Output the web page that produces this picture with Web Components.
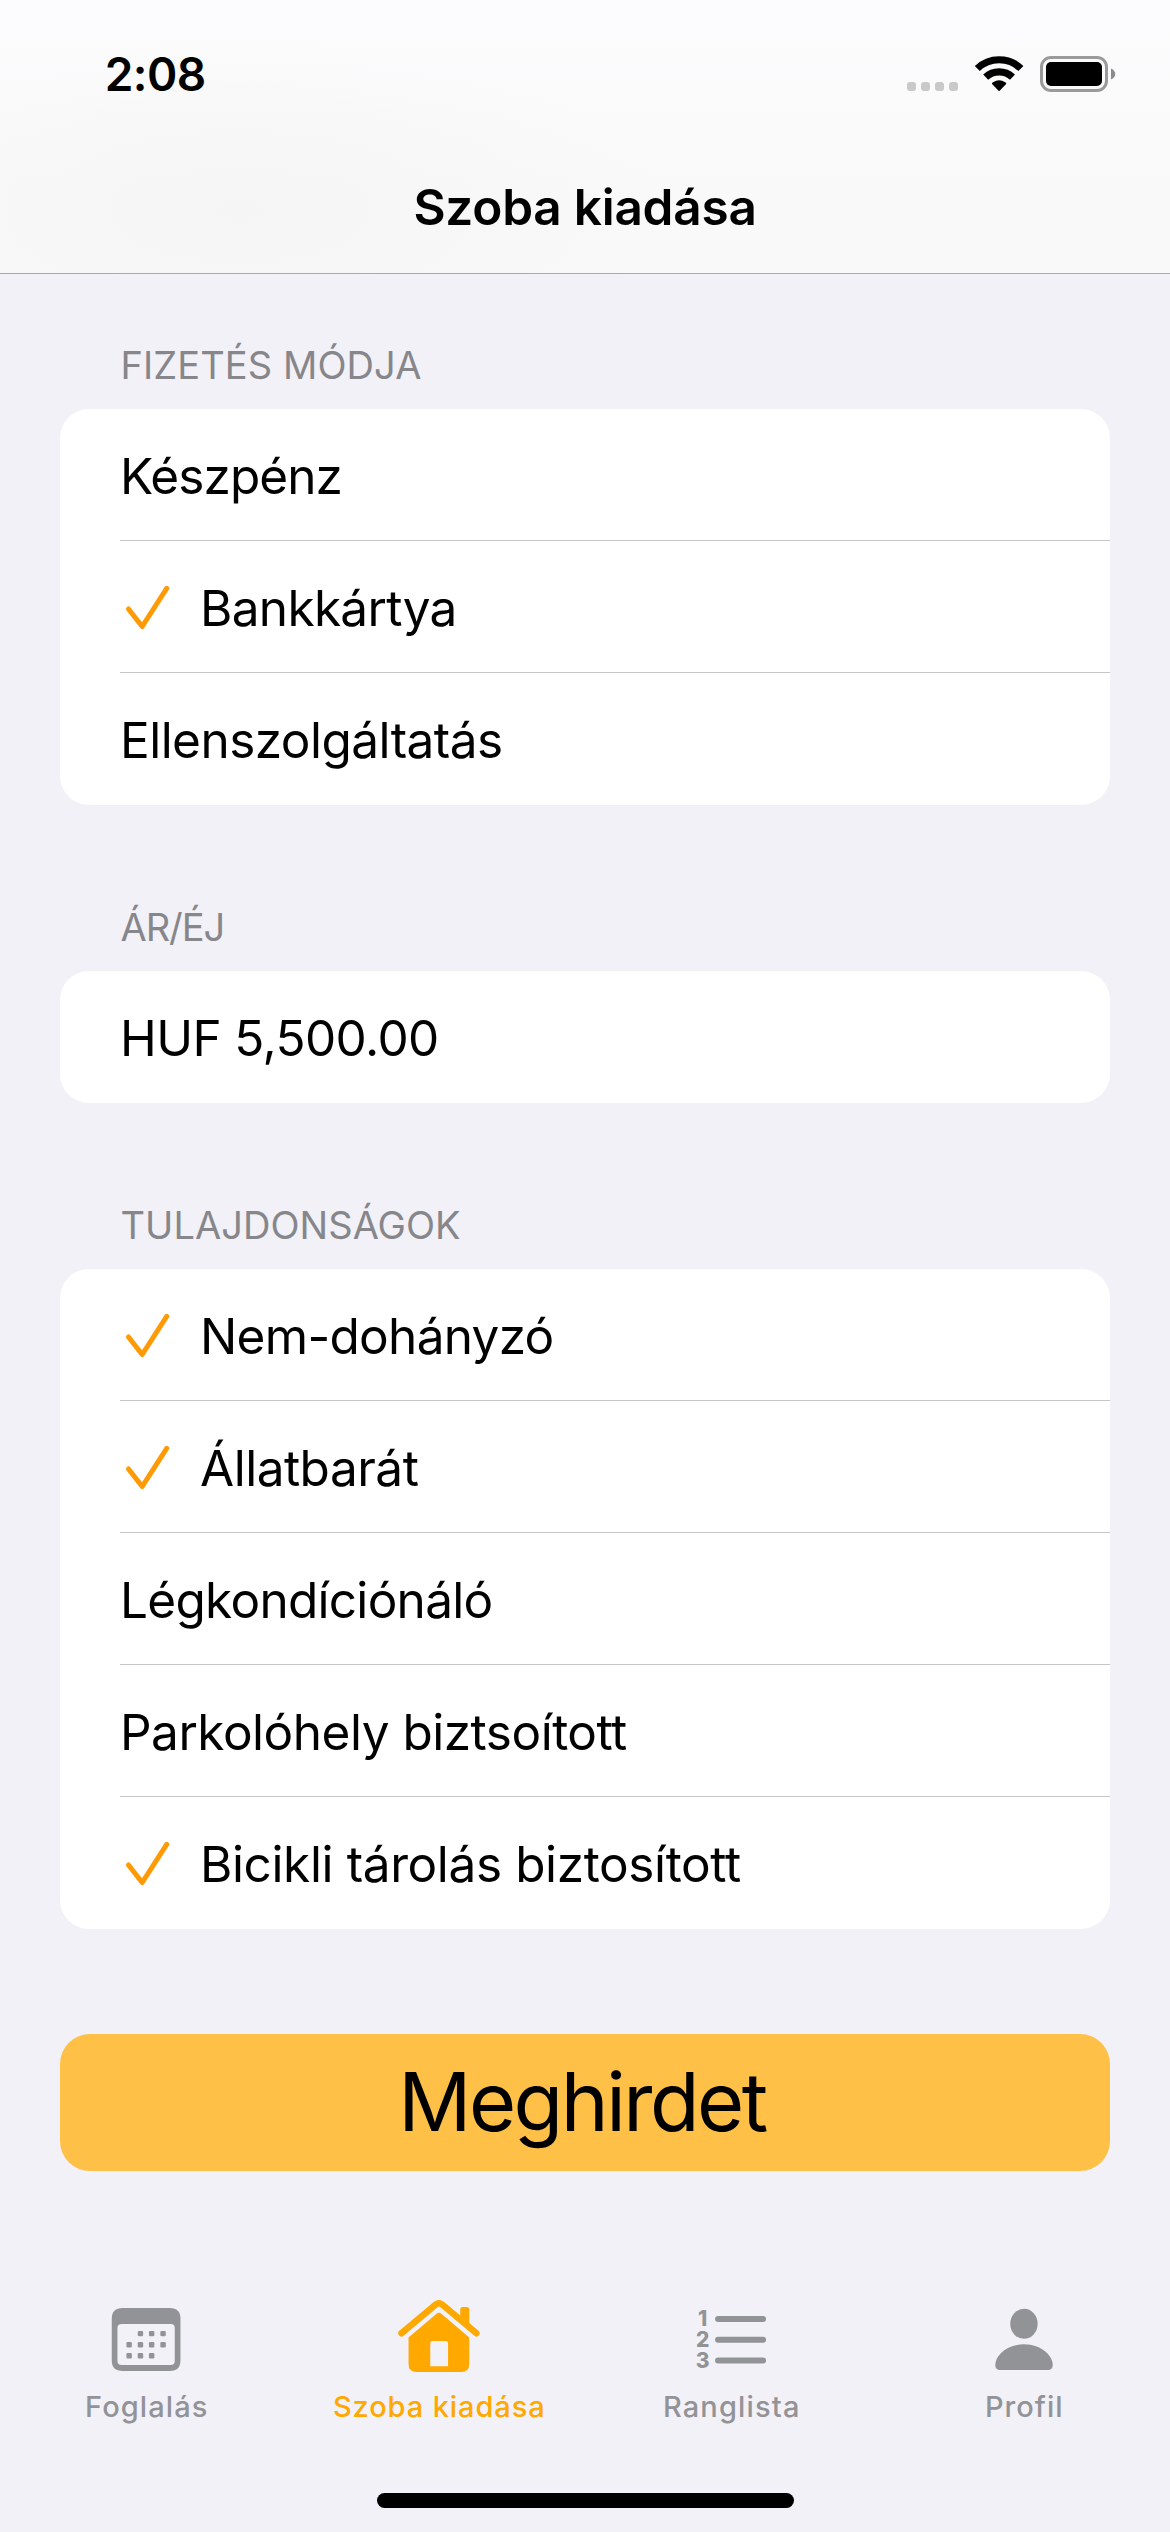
<!DOCTYPE html>
<html lang="hu">
<head>
<meta charset="utf-8">
<title>Szoba kiadása</title>
<style>
  html, body { margin: 0; padding: 0; }
  body { width: 1170px; background: #f2f1f7; font-family: Inter, "Liberation Sans", sans-serif; color: #000; }
</style>
</head>
<body>
<app-screen>
  <nav-header slot="header" time="2:08">Szoba kiadása</nav-header>
  <form-section heading="FIZETÉS MÓDJA" tracking="0.09" first>
    <option-row tracking="-0.93">Készpénz</option-row>
    <option-row tracking="-0.68" checked>Bankkártya</option-row>
    <option-row tracking="-0.54">Ellenszolgáltatás</option-row>
  </form-section>
  <form-section heading="ÁR/ÉJ" tracking="-1.05">
    <option-row tracking="-0.6">HUF 5,500.00</option-row>
  </form-section>
  <form-section heading="TULAJDONSÁGOK" tracking="0.05">
    <option-row tracking="-0.7" checked>Nem-dohányzó</option-row>
    <option-row tracking="-0.5" checked>Állatbarát</option-row>
    <option-row tracking="-0.71">Légkondíciónáló</option-row>
    <option-row tracking="-0.49">Parkolóhely biztsoított</option-row>
    <option-row tracking="-0.38" checked>Bicikli tárolás biztosított</option-row>
  </form-section>
  <primary-button>Meghirdet</primary-button>
  <tab-bar slot="footer">
    <tab-item tracking="1.07">
      <svg slot="icon" width="100" height="80" viewBox="96.25 2295 100 80" fill="#929397">
        <path fill-rule="evenodd" d="M123 2308H170Q180.700 2308 180.700 2318.500V2360.500Q180.700 2371 170 2371H123Q112 2371 112 2360.500V2318.500Q112 2308 123 2308ZM122 2324Q117.700 2324 117.700 2328V2361Q117.700 2365 122 2365H171Q175 2365 175 2361V2328Q175 2324 171 2324Z"/>
        <g>
          <rect x="138" y="2330.900" width="5.400" height="5.400" rx="1.200"/><rect x="149.200" y="2330.900" width="5.400" height="5.400" rx="1.200"/><rect x="160.600" y="2330.900" width="5.400" height="5.400" rx="1.200"/>
          <rect x="126.700" y="2342" width="5.400" height="5.400" rx="1.200"/><rect x="138" y="2342" width="5.400" height="5.400" rx="1.200"/><rect x="149.200" y="2342" width="5.400" height="5.400" rx="1.200"/><rect x="160.600" y="2342" width="5.400" height="5.400" rx="1.200"/>
          <rect x="126.700" y="2353.100" width="5.400" height="5.400" rx="1.200"/><rect x="138" y="2353.100" width="5.400" height="5.400" rx="1.200"/><rect x="149.200" y="2353.100" width="5.400" height="5.400" rx="1.200"/>
        </g>
      </svg>Foglalás</tab-item>
    <tab-item tracking="0.91" active>
      <svg slot="icon" width="100" height="80" viewBox="388.750 2295 100 80" fill="#ffa800">
        <path d="M460 2321V2309.500Q460 2307 462.500 2307H466.500Q469 2307 469 2309.500V2328Z"/>
        <path d="M401.200 2333.300L435.500 2304.500Q438.700 2301.900 441.900 2304.500L476.200 2333.300" fill="none" stroke="#ffa800" stroke-width="6.400" stroke-linecap="round" stroke-linejoin="round"/>
        <path fill-rule="evenodd" d="M408.300 2337.500L436 2313.900Q438.700 2311.800 441.400 2313.900L469 2337.500V2364Q469 2372 461 2372H416.300Q408.300 2372 408.300 2364ZM432.500 2341Q430 2341 430 2343.500V2366.200H447.800V2343.500Q447.800 2341 445.300 2341Z"/>
      </svg>Szoba kiadása</tab-item>
    <tab-item tracking="1.15">
      <svg slot="icon" width="100" height="80" viewBox="681.250 2295 100 80" fill="#929397">
        <g stroke="#929397" stroke-width="6" stroke-linecap="round"><path d="M718.300 2319H763.300M718.300 2339.700H763.300M718.300 2360.400H763.300"/></g>
        <g font-family="Inter" font-weight="800" font-size="21" text-anchor="middle"><text x="703" y="2326">1</text><text x="703" y="2346.700">2</text><text x="703" y="2367.500">3</text></g>
      </svg>Ranglista</tab-item>
    <tab-item tracking="1.04">
      <svg slot="icon" width="100" height="80" viewBox="973.750 2295 100 80" fill="#929397">
        <ellipse cx="1023.700" cy="2323.800" rx="13.700" ry="15"/>
        <path d="M1000 2370Q995 2370 995 2365C995 2356 1006 2344.300 1023.700 2344.300S1052.500 2356 1052.500 2365Q1052.500 2370 1047.500 2370Z"/>
      </svg>Profil</tab-item>
  </tab-bar>
</app-screen>
<script>
  class BaseElement extends HTMLElement {
    connectedCallback() {
      if (this.shadowRoot) return;
      this.attachShadow({ mode: 'open' }).innerHTML = this.render();
    }
    get tracking() { return (this.getAttribute('tracking') || 0) + 'px'; }
  }

  customElements.define('app-screen', class extends BaseElement {
    render() {
      return `<style>
        :host { display: flex; flex-direction: column; width: 1170px; height: 2532px; overflow: hidden; background: #f2f1f7; }
        main { display: flex; flex-direction: column; padding: 0 60px; flex: 1; }
      </style>
      <slot name="header"></slot><main><slot></slot></main><slot name="footer"></slot>`;
    }
  });

  customElements.define('nav-header', class extends BaseElement {
    render() {
      return `<style>
        :host { display: flex; flex-direction: column; height: 273px; border-bottom: 1px solid #a9a9ac;
          background: radial-gradient(ellipse 420px 170px at 240px 210px, #f5f5f5, #f5f5f500), linear-gradient(#fcfcfe, #f9f9f9 70%, #f9f9f9); }
        .status { display: flex; align-items: center; justify-content: space-between; height: 136px; padding: 6px 30px 0 104.7px; }
        time { font-size: 46px; font-weight: 600; letter-spacing: -.53px; line-height: 56px; }
        h1 { margin: 0; font-size: 49.5px; font-weight: 600; letter-spacing: -.23px; line-height: 130px; text-align: center; }
      </style>
      <div class="status"><time>${this.getAttribute('time')}</time>
        <svg width="240" height="48" viewBox="900 50 240 48">
          <g fill="#c9c9ca"><rect x="907" y="82" width="9" height="9" rx="3"/><rect x="921" y="82" width="9" height="9" rx="3"/><rect x="935" y="82" width="9" height="9" rx="3"/><rect x="949" y="82" width="9" height="9" rx="3"/></g>
          <g fill="none" stroke="#000" stroke-width="7.200"><path d="M977.300 68.500A31.500 31.500 0 0 1 1020.900 68.500"/><path d="M985.700 77.200A19.500 19.500 0 0 1 1012.500 77.200"/></g>
          <path d="M999.100 91.200L992 84Q991.800 83 993 82.200Q999.100 78.200 1005.200 82.200Q1006.400 83 1006.200 84Z"/>
          <rect x="1041.500" y="57.500" width="65" height="33" rx="9.500" fill="none" stroke="#9a9a9b" stroke-width="3"/>
          <rect x="1046" y="62" width="56" height="24" rx="5"/>
          <path d="M1111 68.500Q1115.200 70.500 1115.200 74T1111 79.500Z" fill="#8b8b8c"/>
        </svg></div>
      <h1><slot></slot></h1>`;
    }
  });

  customElements.define('form-section', class extends BaseElement {
    render() {
      return `<style>
        :host { display: flex; flex-direction: column; }
        header { display: flex; align-items: flex-end; box-sizing: border-box; height: 166px; padding: 0 60px 21.5px 60.5px;
          font-size: 38px; line-height: 46px; letter-spacing: ${this.tracking}; color: #86868b; }
        :host([first]) header { height: 135px; }
        .card { display: flex; flex-direction: column; background: #fff; border-radius: 29px; overflow: hidden; }
        ::slotted(option-row:last-child) { --divider: transparent; }
      </style>
      <header><span>${this.getAttribute('heading')}</span></header><div class="card"><slot></slot></div>`;
    }
  });

  customElements.define('option-row', class extends BaseElement {
    render() {
      const check = this.hasAttribute('checked')
        ? `<svg width="80" height="60" viewBox="0 36 80 60"><path d="M8.500 68L22.200 85.500L46.700 47.300" fill="none" stroke="#ff9a05" stroke-width="5" stroke-linecap="round" stroke-linejoin="round"/></svg>` : '';
      return `<style>
        :host { display: flex; height: 132px; padding-left: 60px; }
        div { display: flex; align-items: center; flex: 1; box-sizing: border-box; border-bottom: 1px solid var(--divider, #c6c6c8);
          padding-top: 1px; font-size: 49.5px; letter-spacing: ${this.tracking}; white-space: pre; }
        span { line-height: 128px; padding-top: 2px; }
      </style><div>${check}<span><slot></slot></span></div>`;
    }
  });

  customElements.define('primary-button', class extends BaseElement {
    render() {
      return `<style>
        :host { display: flex; margin-top: 105px; }
        button { flex: 1; height: 137px; border: 0; border-radius: 30px; padding: 0 6px 0 0; background: #ffc048; color: #000;
          font: 400 81px/137px Inter, "Liberation Sans", sans-serif; letter-spacing: -2.5px; text-align: center; }
      </style><button><slot></slot></button>`;
    }
  });

  customElements.define('tab-bar', class extends BaseElement {
    render() {
      return `<style>
        :host { display: flex; flex-direction: column; align-items: center; height: 237px; }
        nav { display: grid; grid-template-columns: repeat(4, 1fr); width: 100%; height: 198px; }
        .home { width: 417px; height: 15px; border-radius: 8px; background: #000; }
      </style><nav><slot></slot></nav><div class="home"></div>`;
    }
  });

  customElements.define('tab-item', class extends BaseElement {
    render() {
      const color = this.hasAttribute('active') ? '#ffa800' : '#929397';
      return `<style>
        :host { display: flex; flex-direction: column; align-items: center; gap: 14px; color: ${color}; }
        ::slotted(svg) { display: block; }
        span { font-size: 29px; font-weight: 500; line-height: 36px; letter-spacing: ${this.tracking}; padding-left: 1px; }
      </style><slot name="icon"></slot><span><slot></slot></span>`;
    }
  });
</script>
</body>
</html>
